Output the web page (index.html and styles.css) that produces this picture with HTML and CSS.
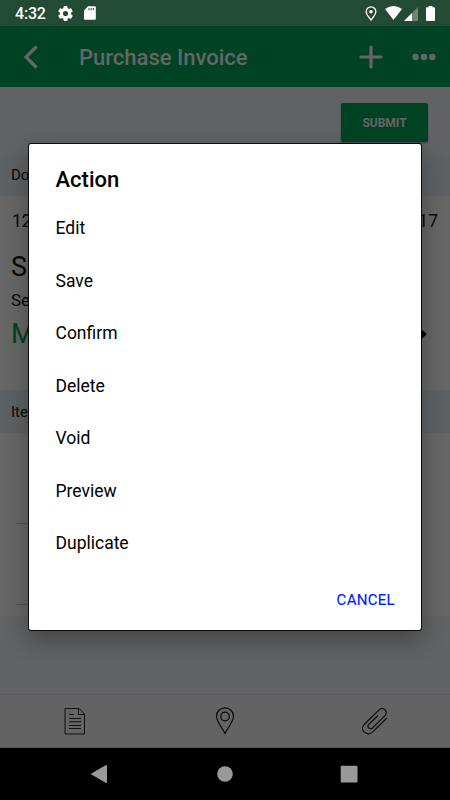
FILE: index.html
```html
<!DOCTYPE html>
<html lang="en">
<head>
<meta charset="utf-8">
<title>Purchase Invoice</title>
<link rel="stylesheet" href="styles.css">
</head>
<body>
<div class="screen">
  <div class="status">
    <span class="clock">4:32</span>
    <svg class="gear" width="17" height="17" viewBox="1 1 22 22"><path fill="#fff" d="M19.14 12.94c.04-.3.06-.61.06-.94s-.02-.64-.07-.94l2.03-1.58a.49.49 0 0 0 .12-.61l-1.92-3.32a.49.49 0 0 0-.59-.22l-2.39.96a7 7 0 0 0-1.62-.94l-.36-2.54A.48.48 0 0 0 13.920 2.400h-3.84a.47.47 0 0 0-.47.41l-.36 2.540c-.59.24-1.130.57-1.620.94l-2.390-.96a.48.48 0 0 0-.59.22L2.740 8.870a.47.47 0 0 0 .12.610l2.030 1.580a7.500 7.500 0 0 0 0 1.880l-2.030 1.580a.49.49 0 0 0-.12.610l1.920 3.320c.12.220.370.290.590.220l2.390-.96c.5.380 1.030.700 1.620.940l.36 2.540c.05.240.240.410.480.410h3.840c.24 0 .44-.17.470-.41l.36-2.540c.59-.24 1.130-.56 1.620-.94l2.390.960c.22.080.47 0 .59-.22l1.920-3.320a.47.47 0 0 0-.12-.61zM12 15.300a3.300 3.300 0 1 1 0-6.600 3.300 3.300 0 0 1 0 6.600z"/></svg>
    <svg class="sd" width="12" height="14" viewBox="0 0 12 14"><path fill="#fff" d="M4 .3h6.800q1 0 1 1v11.400q0 1-1 1H1q-1 0-1-1V4.500z"/><path stroke="#234a34" stroke-width="1" d="M5 2v2.300M7.200 2v2.300M9.400 2v2.300"/></svg>
    <span class="grow"></span>
    <svg class="gps" width="12" height="16" viewBox="0 0 12 16"><path fill="none" stroke="#fff" stroke-width="1.300" d="M6 14C3.600 10.900 1.200 8.300 1.200 5.700a4.800 4.800 0 0 1 9.600 0C10.800 8.300 8.400 10.900 6 14z"/><circle cx="6" cy="5.700" r="1.800" fill="#fff"/></svg>
    <svg class="wifi" width="17" height="14" viewBox="0 0 17 14"><path fill="#fff" d="M0 3Q8.500-3 17 3L8.500 14z"/></svg>
    <svg class="cell" width="14" height="14" viewBox="0 0 14 14"><path fill="#6d8676" d="M14 0v14H0z"/><path fill="#fff" d="M8 6v8H0z"/></svg>
    <svg class="battery" width="9" height="15" viewBox="0 0 9 15"><path fill="#fff" d="M2.500 0h4v1.300H8q1 0 1 1V14q0 1-1 1H1q-1 0-1-1V2.300q0-1 1-1h1.500z"/></svg>
  </div>
  <header class="bar">
    <svg width="16" height="24" viewBox="0 0 16 24"><path fill="none" stroke="#666" stroke-width="3.200" d="M13.600 1.500 3 12l10.600 10.500"/></svg>
    <h1>Purchase Invoice</h1>
    <svg width="24" height="24" viewBox="0 0 24 24"><path stroke="#666" stroke-width="3.200" stroke-linecap="round" d="M2 12h20M12 2v20"/></svg>
    <svg class="dots" width="24" height="8" viewBox="0 0 24 8" fill="#666"><circle cx="3.600" cy="4" r="3.200"/><circle cx="12" cy="4" r="3.200"/><circle cx="20.300" cy="4" r="3.200"/></svg>
  </header>
  <main>
    <div class="actions"><button class="submit">SUBMIT</button></div>
    <div class="band doc">Do</div>
    <section class="info">
      <div class="row"><span>12</span><span>17</span></div>
      <div class="name">S</div>
      <div class="sub">Se</div>
      <div class="row money"><span>M</span><svg width="16" height="12" viewBox="0 0 16 12"><path fill="#080808" d="M0 4h8V1.500q1-1.500 2.500 0L15 5q.8 1 0 2l-4.500 4q-1.500 1-2.500-.5V8H0z"/></svg></div>
    </section>
    <div class="band items">Ite</div>
    <section class="lines"><div class="line first"></div><div class="line"></div></section>
  </main>
  <nav class="tabs">
    <svg width="24" height="28" viewBox="0 0 24 28" fill="none" stroke="#111" stroke-width="1"><path d="M2 1.500h14l5.500 5.500v20H2zM15.500 1.500v6h6"/><path stroke-width="1.100" d="M6 7.500h5M6 11.500h12M6 14.700h12M6 18.500h12M6 21.500h12"/></svg>
    <svg class="pin" width="24" height="28" viewBox="0 0 24 28" fill="none" stroke="#080808" stroke-width="1.200"><path d="M12 26.500C9 20.500 3.500 14.500 3.500 9.300a8.500 8.500 0 0 1 17 0C20.500 14.500 15 20.500 12 26.500z"/><circle cx="12" cy="9.500" r="4.300"/></svg>
    <svg width="27" height="28" viewBox="0 0 27 28" fill="none" stroke="#0b0b0b" stroke-width="1.100" stroke-linecap="round"><path d="M25.500 11.500 11.700 24.800C5.500 30 -1.700 23 3.200 17.500L17.500 3.300c4.500-4.300 10.300 1 6.200 5.600L11.800 20.700c-3.300 2.700-6.500-.8-3.800-3.600L16.500 9"/></svg>
  </nav>
  <div class="system">
    <svg width="18" height="18" viewBox="0 0 18 18"><path fill="#999" d="M16 0q1 0 1 .8v16.400q0 .8-1 .8L1.400 9.600q-1-.6 0-1.200z"/></svg>
    <svg width="18" height="18" viewBox="0 0 18 18"><circle cx="9" cy="9" r="7.800" fill="#999"/></svg>
    <svg width="18" height="18" viewBox="0 0 18 18"><rect x=".7" y=".7" width="16.800" height="16.800" rx="1.200" fill="#999"/></svg>
  </div>
  <div class="dialog" role="dialog">
    <h2>Action</h2>
    <ul><li>Edit</li><li>Save</li><li>Confirm</li><li>Delete</li><li>Void</li><li>Preview</li><li>Duplicate</li></ul>
    <button class="cancel">CANCEL</button>
  </div>
</div>
</body>
</html>
```
FILE: styles.css
```css
* { box-sizing: border-box; }
body { margin: 0; font-family: Roboto, sans-serif; color: #080808; }
h1, h2, ul { margin: 0; padding: 0; }
button { border: 0; font-family: inherit; }
svg { display: block; flex: none; }
.screen { position: relative; display: flex; flex-direction: column; width: 450px; height: 800px; overflow: hidden; background: #616264; }
.status { display: flex; align-items: center; height: 26px; padding: 0 15px 0 15px; background: #234a34; color: #fff; }
.clock { width: 31px; font-size: 16px; font-weight: 500; line-height: 26px; padding-top: 2px; letter-spacing: -.2px; }
.gear { margin-left: 11px; }
.sd { margin-left: 10px; }
.grow { flex: 1; }
.gps { margin-top: 1px; }
.wifi { margin-left: 8px; }
.cell { margin: 1px 8px 0 2px; }
.bar { display: flex; align-items: center; height: 61px; padding: 0 14px 0 23px; background: #004324; color: #666; }
.bar h1 { flex: 1; margin-left: 40px; padding-top: 2px; font-size: 22px; font-weight: 500; }
.dots { margin-left: 29px; }
main { flex: 1; }
.actions { display: flex; justify-content: flex-end; height: 68px; padding: 16px 22px 0 0; }
.submit { width: 87px; height: 39px; border-radius: 2px; background: #004324; color: #666; font-size: 12px; font-weight: 700; box-shadow: 0 1px 2px rgba(0,0,0,.35); }
.band { padding-left: 11px; background: #5e6164; font-size: 15px; }
.doc { height: 41px; line-height: 41px; }
.info { height: 194px; padding: 12px 12px 0 11px; background: #666; }
.row { display: flex; justify-content: space-between; align-items: center; font-size: 17.500px; line-height: 26px; }
.row span:first-child { padding-left: 1px; }
.name { margin-top: 15px; font-size: 27px; line-height: 36px; }
.sub { font-size: 17px; line-height: 30px; }
.money { font-size: 27px; line-height: 38px; color: #004324; }
.money span:first-child { padding-left: 0; }
.money svg { margin-right: 11px; }
.items { height: 43px; padding-top: 1px; line-height: 43px; }
.lines { height: 183px; padding: 0 40px 0 16px; background: #666; }
.line { height: 81px; border-bottom: 1px solid #555; }
.first { height: 91px; }
.tabs { display: flex; align-items: center; justify-content: space-around; height: 54px; padding-left: 1px; background: #636363; border-top: 1px solid #5a5c60; border-bottom: 1px solid #505050; }
.pin { margin: 0 -1px 0 1px; }
.system { display: flex; align-items: center; justify-content: space-between; height: 52px; padding: 0 92px 0 90px; background: #000; }
.system svg:nth-child(2) { margin-left: 1px; }
.dialog { position: absolute; left: 29px; top: 144px; width: 392px; height: 486px; padding: 21px 26px 0 26.500px; border-radius: 2px; background: #fff; color: #000; box-shadow: 0 0 0 1px rgba(0,0,0,.85), 0 10px 25px rgba(0,0,0,.32); }
.dialog h2 { font-size: 22px; font-weight: 500; line-height: 30px; }
.dialog ul { margin-top: 7.400px; list-style: none; font-size: 17.500px; }
.dialog li { height: 52.500px; line-height: 52.500px; }
.cancel { display: block; margin: 20px 0 0 auto; padding: 0; background: none; color: #001cff; font-size: 15px; line-height: 20px; letter-spacing: .3px; -webkit-text-stroke: .15px #001cff; }
```
